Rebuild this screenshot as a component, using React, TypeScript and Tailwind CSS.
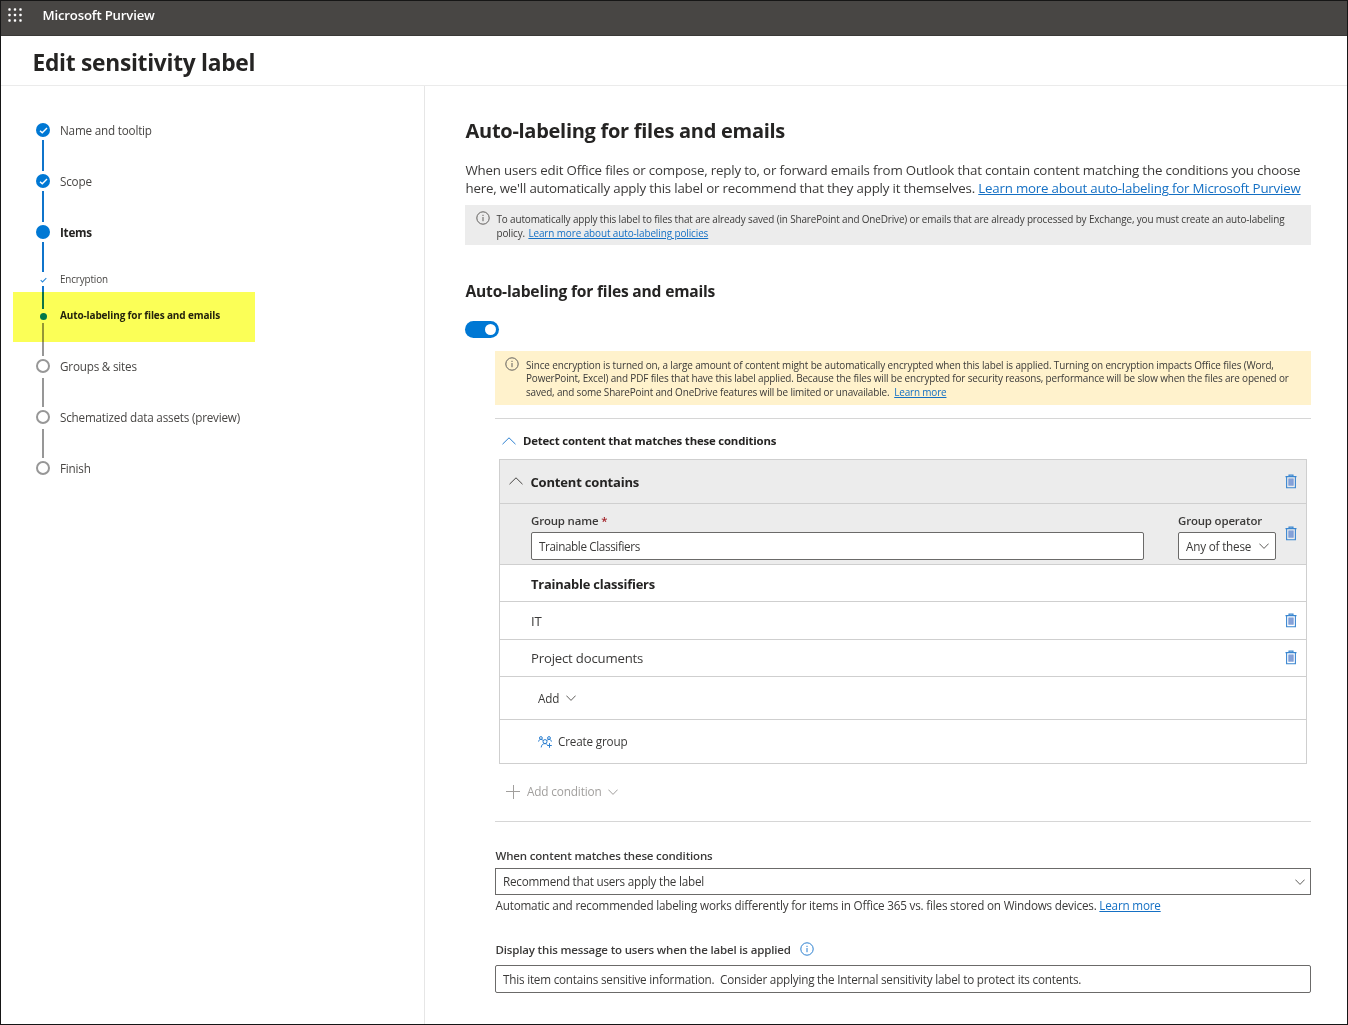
import type { ReactNode } from "react";

function Check({ className }: { className: string }) {
  return (
    <svg viewBox="0 0 10 8" className={className} fill="none" stroke="currentColor">
      <path d="M1 4.2 3.6 6.7 9 1.2" />
    </svg>
  );
}

function Chevron({ up = false, className }: { up?: boolean; className: string }) {
  return (
    <svg viewBox="0 0 14 8" className={className} fill="none" stroke="currentColor" preserveAspectRatio="none">
      <path d={up ? "M.5 7.2 7 .8l6.5 6.4" : "M.5.8 7 7.2 13.5.8"} vectorEffect="non-scaling-stroke" />
    </svg>
  );
}

function Info({ className }: { className: string }) {
  return (
    <svg viewBox="0 0 14 14" className={className} fill="none" stroke="currentColor">
      <circle cx="7" cy="7" r="6.2" />
      <path d="M7 6v4.2M7 3.8v1.2" />
    </svg>
  );
}

function Trash() {
  return (
    <svg viewBox="0 0 12 15" className="h-[15px] w-3 shrink-0" fill="none">
      <path d="M3.2 4.5h5.6v7.2H3.2z" fill="#8fa9dc" />
      <path d="M4.9 4.5v7.2M7.1 4.5v7.2" stroke="#6f92d2" strokeWidth=".7" />
      <path d="M.5 2.6h11M4 2.4V1.1h4v1.3M1.6 2.8v10.9h8.8V2.8" stroke="#3a86d0" strokeWidth="1.1" />
    </svg>
  );
}

function CreateGroupIcon() {
  return (
    <svg viewBox="0 0 14 12" className="h-3 w-3.5 shrink-0" fill="none" stroke="#2b7fd0" strokeWidth="1">
      <circle cx="2.9" cy="2" r="1.4" />
      <circle cx="11" cy="2" r="1.4" />
      <circle cx="7" cy="5.6" r="2" />
      <path d="M.6 5.6c.2-1.5 1-2.2 2.3-2.2 1 0 1.7.5 2.4 1.2M13.4 5.6c-.2-1.5-1-2.2-2.3-2.2-1 0-1.7.5-2.4 1.2M3.2 11.4c.2-2.4 1.6-3.8 3.8-3.8 1 0 1.8.4 2.4 1M11.5 7.2v4.6M9.2 9.5h4.6" />
    </svg>
  );
}

function Circle({ state }: { state: "done" | "current" | "todo" }) {
  if (state === "todo") return <span className="size-3.5 rounded-full border-2 border-[#979797]" />;
  return (
    <span className="flex size-3.5 items-center justify-center rounded-full bg-[#0078d4] text-white">
      {state === "done" && <Check className="h-[7px] w-[9px] stroke-[1.6]" />}
    </span>
  );
}

function Step({ state, children }: { state: "done" | "current" | "todo"; children: ReactNode }) {
  return (
    <li className="flex h-5 items-center">
      <Circle state={state} />
      <span
        className={
          state === "current"
            ? "ml-2.5 pt-px text-[11.7px] font-bold tracking-[-0.024em] text-[#242321]"
            : "ml-2.5 pt-px text-[11.7px] tracking-[-0.017em] text-[#484644]"
        }
      >
        {children}
      </span>
    </li>
  );
}

function Line({ className }: { className: string }) {
  return <li aria-hidden className={`ml-1.5 w-0.5 ${className}`} />;
}

function Link({ children }: { children: ReactNode }) {
  return <a className="text-[#1570c4] underline decoration-1 underline-offset-1">{children}</a>;
}

export default function App() {
  return (
    <div className="flex h-[1025px] w-[1348px] flex-col overflow-hidden border border-[#161616] bg-white font-['Open_Sans','Noto_Sans',sans-serif] text-[#3b3a39]">
      <header className="flex h-[35px] shrink-0 items-center border-b border-[#3a3937] bg-[#484644] pb-1">
        <svg viewBox="0 0 14 14" className="mb-0.5 ml-[7px] size-3.5 fill-white">
          {[1.5, 7, 12.5].map((y) =>
            [1.5, 7, 12.5].map((x) => <rect key={`${x}-${y}`} x={x - 1.2} y={y - 1.2} width="2.4" height="2.4" rx=".8" />),
          )}
        </svg>
        <span className="ml-[20.5px] text-[13.2px] font-semibold tracking-[-0.014em] text-white">Microsoft Purview</span>
      </header>
      <div className="flex h-[50px] shrink-0 items-center border-b border-[#ebebeb] pl-[31.5px]">
        <h1 className="pt-[5px] text-[22.75px] leading-none font-bold tracking-[-0.012em] text-[#252423]">Edit sensitivity label</h1>
      </div>

      <div className="flex min-h-0 flex-1">
        <nav className="w-[424px] shrink-0 border-r border-[#e6e6e6] pt-[34px] pl-[35px]">
          <ol>
            <Step state="done">Name and tooltip</Step>
            <Line className="h-[31px] bg-[#0f74cb]" />
            <Step state="done">Scope</Step>
            <Line className="h-[31px] bg-[#0f74cb]" />
            <Step state="current">Items</Step>
            <Line className="h-[30px] bg-[#0f74cb]" />
            <li className="flex h-3.5 items-center">
              <span className="flex w-3.5 justify-center text-[#2b88d8]">
                <Check className="mt-0.5 h-[6px] w-[7px] stroke-[1.5]" />
              </span>
              <span className="ml-2.5 text-[9.9px] tracking-[-0.014em] text-[#484644]">Encryption</span>
            </li>
            <Line className="h-[23px] bg-[#0f74cb]" />
            <li className="relative flex h-3.5 items-center">
              <span className="flex w-3.5 justify-center">
                <span className="size-[7px] rounded-full bg-[#0078d4]" />
              </span>
              <span className="ml-2.5 pb-[1.5px] text-[10.02px] font-bold tracking-[-0.014em] text-[#242321]">
                Auto-labeling for files and emails
              </span>
              <span className="absolute -top-[17px] -left-[23px] h-[50px] w-[242px] bg-[#fbff57] mix-blend-multiply" />
            </li>
            <Line className="h-[33px] bg-[#979797]" />
            <Step state="todo">Groups &amp; sites</Step>
            <Line className="mt-0.5 h-[29px] bg-[#979797]" />
            <Step state="todo">Schematized data assets (preview)</Step>
            <Line className="mt-0.5 h-[29px] bg-[#979797]" />
            <Step state="todo">Finish</Step>
          </ol>
        </nav>

        <main className="w-[886px] shrink-0 pt-[33px] pl-10">
          <h2 className="h-6 pl-[0.5px] text-[20px] leading-6 font-bold tracking-[-0.014em] text-[#252423]">
            Auto-labeling for files and emails
          </h2>
          <p className="mt-[18px] pl-[0.5px] text-[13.3px] leading-[18px] tracking-[-0.015em] whitespace-nowrap">
            <span className="tracking-[-0.0135em]">
              When users edit Office files or compose, reply to, or forward emails from Outlook that contain content matching the conditions you choose
            </span>
            <br />
            here, we'll automatically apply this label or recommend that they apply it themselves.{" "}
            <Link>Learn more about auto-labeling for Microsoft Purview</Link>
          </p>

          <div className="mt-2 flex h-10 bg-[#ececec] pt-1.5 pl-[10.5px]">
            <Info className="size-3.5 text-[#605e5c]" />
            <p className="ml-[7px] pt-px text-[9.93px] leading-[14px] tracking-[-0.0135em] whitespace-nowrap">
              To automatically apply this label to files that are already saved (in SharePoint and OneDrive) or emails that are already processed by Exchange, you must create an auto-labeling
              <br />
              policy. <span className="ml-px tracking-[-0.01em]"><Link>Learn more about auto-labeling policies</Link></span>
            </p>
          </div>

          <h3 className="mt-9 h-5 pl-[0.5px] text-[15.6px] leading-[20px] font-bold tracking-[-0.013em] text-[#252423]">
            Auto-labeling for files and emails
          </h3>
          <div className="mt-5 flex h-[17px] w-[34px] items-center justify-end rounded-full bg-[#0078d4] pr-[3px]">
            <span className="size-[11px] rounded-full bg-white" />
          </div>

          <section className="mt-[13px] ml-[30px]">
            <div className="flex h-[54px] bg-[#fff2cc] pt-1.5 pl-2.5">
              <Info className="size-3.5 text-[#605e5c]" />
              <p className="ml-[7px] pt-[1.5px] text-[9.95px] leading-[13.7px] tracking-[-0.0145em] whitespace-nowrap">
                <span className="tracking-[-0.0125em]">
                  Since encryption is turned on, a large amount of content might be automatically encrypted when this label is applied. Turning on encryption impacts Office files (Word,
                </span>
                <br />
                <span className="tracking-[-0.0155em]">
                  PowerPoint, Excel) and PDF files that have this label applied. Because the files will be encrypted for security reasons, performance will be slow when the files are opened or
                </span>
                <br />
                <span className="tracking-[-0.016em]">
                  saved, and some SharePoint and OneDrive features will be limited or unavailable.&nbsp; <Link>Learn more</Link>
                </span>
              </p>
            </div>
            <div className="mt-[13px] h-px bg-[#d6d6d6]" />

            <div className="mt-3 flex h-5 items-center pl-[7px]">
              <Chevron up className="mb-px h-[8px] w-3.5 text-[#2b7fd0]" />
              <h4 className="ml-[7px] text-[11.4px] font-bold tracking-[-0.016em] text-[#252423]">Detect content that matches these conditions</h4>
            </div>

            <div className="mt-2 mr-1 ml-1 flex h-[305px] flex-col border border-[#cfcfcf]">
              <div className="flex h-11 items-center border-b border-[#cfcfcf] bg-[#ececec] pr-[9px] pl-[9px]">
                <Chevron up className="mb-0.5 h-[8px] w-3.5 text-[#484644]" />
                <h4 className="ml-[7.5px] flex-1 pt-0.5 text-[13px] font-bold tracking-[-0.014em] text-[#252423]">Content contains</h4>
                <Trash />
              </div>
              <div className="flex h-[61px] border-b border-[#cfcfcf] bg-[#ececec] pt-2 pr-[9px] pl-[31px]">
                <div className="w-[613px]">
                  <div className="h-5 text-[11.45px] leading-[18px] font-semibold tracking-[-0.014em]">
                    Group name <span className="text-[#a4262c]">*</span>
                  </div>
                  <div className="flex h-7 items-center rounded-[2px] border border-[#6b6a69] bg-white pt-px pl-[7px] text-[11.7px] tracking-[-0.032em]">
                    Trainable Classifiers
                  </div>
                </div>
                <div className="ml-[34px] w-[98px]">
                  <div className="h-5 text-[11.45px] leading-[18px] font-semibold tracking-[-0.014em] whitespace-nowrap">Group operator</div>
                  <div className="flex h-7 items-center justify-between rounded-[2px] border border-[#6b6a69] bg-white pr-1.5 pl-[7px] text-[11.7px] tracking-[-0.016em]">
                    <span className="pt-px">Any of these</span>
                    <Chevron className="h-[6px] w-2.5 text-[#605e5c]" />
                  </div>
                </div>
                <div className="ml-[9px] pt-[14px]">
                  <Trash />
                </div>
              </div>
              <div className="flex h-[37px] items-center border-b border-[#cfcfcf] pt-[3px] pl-[31px] text-[12.9px] font-bold tracking-[-0.016em] text-[#252423]">
                Trainable classifiers
              </div>
              <div className="flex h-[38px] items-center justify-between border-b border-[#cfcfcf] pr-[9px] pl-[31px] text-[13.17px] tracking-[-0.014em]">
                <span className="pt-0.5">IT</span>
                <Trash />
              </div>
              <div className="flex h-[37px] items-center justify-between border-b border-[#cfcfcf] pr-[9px] pl-[31px] text-[13.17px] tracking-[-0.014em]">
                <span className="pt-0.5">Project documents</span>
                <span className="pb-0.5">
                  <Trash />
                </span>
              </div>
              <div className="flex h-[43px] items-center border-b border-[#cfcfcf] pl-[38px] text-[11.7px] tracking-[-0.014em]">
                <span className="pt-px">Add</span>
                <Chevron className="ml-[7px] h-[6px] w-2.5 text-[#605e5c]" />
              </div>
              <div className="flex flex-1 items-center pl-[38px] text-[11.7px] tracking-[-0.014em]">
                <CreateGroupIcon />
                <span className="ml-1.5">Create group</span>
              </div>
            </div>

            <div className="mt-[18px] flex h-5 items-center pl-[11px] text-[11.8px] tracking-[-0.014em] text-[#a19f9d]">
              <svg viewBox="0 0 14 14" className="size-3.5" stroke="currentColor">
                <path d="M7.5 0v14M0 6.5h14" />
              </svg>
              <span className="ml-[7px]">Add condition</span>
              <Chevron className="ml-[6px] h-[6px] w-2.5" />
            </div>
            <div className="mt-[19px] h-px bg-[#d6d6d6]" />

            <div className="mt-6 h-[22px] pl-[0.5px] text-[11.5px] leading-5 font-semibold tracking-[-0.015em]">
              When content matches these conditions
            </div>
            <div className="flex h-[27px] items-center justify-between border border-[#6b6a69] pr-[5px] pl-[7px] text-[11.7px] tracking-[-0.02em]">
              Recommend that users apply the label
              <Chevron className="h-[6px] w-2.5 text-[#605e5c]" />
            </div>
            <p className="h-5 pl-[0.5px] text-[11.7px] leading-5 tracking-[-0.017em] whitespace-nowrap">
              Automatic and recommended labeling works differently for items in Office 365 vs. files stored on Windows devices.{" "}
              <Link>Learn more</Link>
            </p>
            <div className="mt-[25px] flex h-[25px] pl-[0.5px] text-[11.5px] leading-5 font-semibold tracking-[-0.014em]">
              Display this message to users when the label is applied
              <Info className="mt-0.5 ml-[9px] size-3.5 text-[#2b7fd0]" />
            </div>
            <div className="flex h-7 items-center rounded-[2px] border border-[#6b6a69] pt-px pl-[7px] text-[11.7px] tracking-[-0.0175em]">
              This item contains sensitive information.&nbsp; Consider applying the Internal sensitivity label to protect its contents.
            </div>
          </section>
        </main>
      </div>
    </div>
  );
}
